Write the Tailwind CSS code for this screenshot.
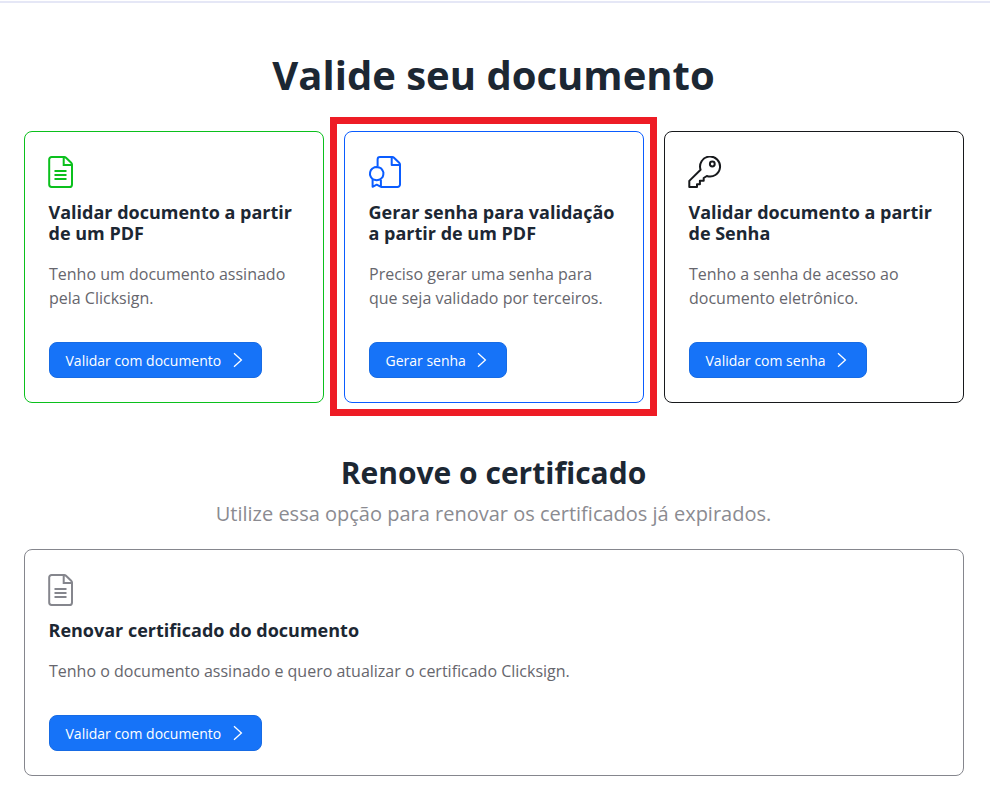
<!DOCTYPE html>
<html lang="pt-BR">
<head>
<meta charset="utf-8">
<title>Valide seu documento</title>
<script src="https://cdn.jsdelivr.net/npm/@tailwindcss/browser@4"></script>
</head>
<body class="bg-white font-['Open_Sans',sans-serif] text-[#1c2733]">
<div class="h-[794px] w-[990px] overflow-hidden border-t border-white">
  <div class="h-[2px] bg-[#e5e7f6]"></div>
  <main class="px-6">
    <h1 class="mt-[44px] h-[56px] w-[939px] text-center text-[40px] leading-[56px] font-bold whitespace-nowrap">Valide seu documento</h1>
    <div class="mt-[28px] grid grid-cols-[300px_300px_300px] gap-5">
      <section class="h-[272px] rounded-lg border border-[#0bc01d] px-6 pt-6">
        <svg class="-ml-px h-8 w-[26px]" viewBox="0 0 26 32" fill="none" stroke="#0bc01d" stroke-width="2"><path d="M3.6 1h12.6c.8 0 1.3.2 1.8.7l5.2 5c.6.6.8 1.1.8 1.9v19.8A2.6 2.6 0 0 1 21.4 31H3.6A2.4 2.4 0 0 1 1.2 28.6V3.4A2.4 2.4 0 0 1 3.6 1ZM15.7 1v8H24M6.5 15h12M6.5 19h12M6.5 23h12"/></svg>
        <h2 class="mt-[14px] -ml-[0.5px] text-[18px] leading-[21px] font-bold whitespace-nowrap">Validar documento a partir<br>de um PDF</h2>
        <p class="mt-[18px] text-[16px] leading-6 whitespace-nowrap text-[#66666d]">Tenho um documento assinado<br>pela Clicksign.</p>
        <a class="mt-8 flex h-9 w-[213px] items-center rounded-lg border border-[#176be4] bg-[#1673f8] pl-[15.5px] text-sm text-white"><span class="pt-[2px]">Validar com documento</span><svg class="ml-[11.5px] h-4 w-2.5" viewBox="0 0 10 16" fill="none" stroke="currentColor" stroke-width="1.3"><path d="m1 1.2 7.4 6.8L1 14.8"/></svg></a>
      </section>
      <section class="relative h-[272px] rounded-lg border border-[#0a5cff] px-6 pt-6">
        <div class="pointer-events-none absolute -top-[15px] -left-[15px] h-[299px] w-[327px] border-[7px] border-[#ee1c25]"></div>
        <svg class="-ml-px h-8 w-[34px]" viewBox="0 0 34 32" fill="none" stroke="#0a5cff" stroke-width="2" stroke-linejoin="round"><path d="M9.6 10.5V3.4A2.4 2.4 0 0 1 12 1h12.2c.8 0 1.3.2 1.8.7l5.2 5c.6.6.8 1.1.8 1.9v19.9a2.5 2.5 0 0 1-2.5 2.5H13M23.7 1v8H32"/><path d="m8.7 10.9 2.3.5 2.1 1 1.4 1.9.9 2.1-.1 2.3-.6 2.2-1.6 1.8-2 1.1-2.4.5-2.3-.5-2.1-1-1.5-1.9-.8-2.1.1-2.4.7-2.2 1.6-1.7 2-1.2Z"/><path d="M4.6 23.7v7.1l4.1-2.1 4.2 2.1v-7.1"/></svg>
        <h2 class="mt-[14px] -ml-[0.5px] text-[18px] leading-[21px] font-bold whitespace-nowrap">Gerar senha para validação<br>a partir de um PDF</h2>
        <p class="mt-[18px] text-[16px] leading-6 whitespace-nowrap text-[#66666d]">Preciso gerar uma senha para<br>que seja validado por terceiros.</p>
        <a class="mt-8 flex h-9 w-[138px] items-center rounded-lg border border-[#176be4] bg-[#1673f8] pl-[15.5px] text-sm text-white"><span class="pt-[2px]">Gerar senha</span><svg class="ml-[11.5px] h-4 w-2.5" viewBox="0 0 10 16" fill="none" stroke="currentColor" stroke-width="1.3"><path d="m1 1.2 7.4 6.8L1 14.8"/></svg></a>
      </section>
      <section class="h-[272px] rounded-lg border border-[#17191c] px-6 pt-6">
        <svg class="-ml-px h-8 w-[34px]" viewBox="0 0 34 32" fill="none" stroke="#17191c" stroke-width="2" stroke-linejoin="round"><path d="M12.6 13.8A10 10 0 1 1 18.8 20l-3.1 2v2.7h-3.8v3.5H9V31H1.3v-6.1L12.6 13.8Z"/><circle cx="24.3" cy="8" r="2.4"/></svg>
        <h2 class="mt-[14px] -ml-[0.5px] text-[18px] leading-[21px] font-bold whitespace-nowrap">Validar documento a partir<br>de Senha</h2>
        <p class="mt-[18px] text-[16px] leading-6 whitespace-nowrap text-[#66666d]">Tenho a senha de acesso ao<br>documento eletrônico.</p>
        <a class="mt-8 flex h-9 w-[178px] items-center rounded-lg border border-[#176be4] bg-[#1673f8] pl-[15.5px] text-sm text-white"><span class="pt-[2px]">Validar com senha</span><svg class="ml-[11.5px] h-4 w-2.5" viewBox="0 0 10 16" fill="none" stroke="currentColor" stroke-width="1.3"><path d="m1 1.2 7.4 6.8L1 14.8"/></svg></a>
      </section>
    </div>
    <h1 class="mt-[50px] h-10 w-[939px] text-center text-[30px] leading-10 font-bold">Renove o certificado</h1>
    <p class="mt-[6px] h-[30px] w-[939px] text-center text-[20px] leading-[30px] text-[#8b8b91]">Utilize essa opção para renovar os certificados já expirados.</p>
    <section class="mt-5 h-[227px] w-[940px] rounded-lg border border-[#85868d] px-6 pt-6">
      <svg class="-ml-px h-8 w-[26px]" viewBox="0 0 26 32" fill="none" stroke="#85868d" stroke-width="2"><path d="M3.6 1h12.6c.8 0 1.3.2 1.8.7l5.2 5c.6.6.8 1.1.8 1.9v19.8A2.6 2.6 0 0 1 21.4 31H3.6A2.4 2.4 0 0 1 1.2 28.6V3.4A2.4 2.4 0 0 1 3.6 1ZM15.7 1v8H24M6.5 15h12M6.5 19h12M6.5 23h12"/></svg>
      <h2 class="mt-[14px] -ml-[0.5px] text-[18px] leading-[21px] font-bold">Renovar certificado do documento</h2>
      <p class="mt-[18px] text-[16px] leading-6 text-[#66666d]">Tenho o documento assinado e quero atualizar o certificado Clicksign.</p>
      <a class="mt-8 flex h-9 w-[213px] items-center rounded-lg border border-[#176be4] bg-[#1673f8] pl-[15.5px] text-sm text-white"><span class="pt-[2px]">Validar com documento</span><svg class="ml-[11.5px] h-4 w-2.5" viewBox="0 0 10 16" fill="none" stroke="currentColor" stroke-width="1.3"><path d="m1 1.2 7.4 6.8L1 14.8"/></svg></a>
    </section>
  </main>
</div>
</body>
</html>
